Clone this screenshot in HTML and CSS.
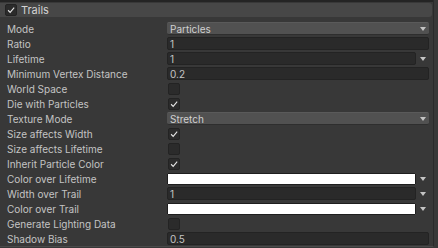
FILE: index.html
```html
<!DOCTYPE html>
<html>
<head>
<meta charset="utf-8">
<link rel="stylesheet" href="styles.css">
</head>
<body>
<div class="panel">
  <div class="topline"></div>
  <div class="header">
    <span class="toggle on hdr"><svg viewBox="0 0 12 12"><path d="M2.5 6.3 L5 8.8 L9.8 3.2" /></svg></span>
    <span class="title">Trails</span>
  </div>
  <div class="rows">
    <div class="row"><span class="label">Mode</span><div class="ctrl"><div class="dropdown"><span>Particles</span><i class="arrow"></i></div></div></div>
    <div class="row"><span class="label">Ratio</span><div class="ctrl"><div class="field">1</div></div></div>
    <div class="row"><span class="label">Lifetime</span><div class="ctrl"><div class="field short">1</div><i class="arrow side"></i></div></div>
    <div class="row"><span class="label">Minimum Vertex Distance</span><div class="ctrl"><div class="field">0.2</div></div></div>
    <div class="row"><span class="label">World Space</span><div class="ctrl"><span class="toggle"></span></div></div>
    <div class="row"><span class="label">Die with Particles</span><div class="ctrl"><span class="toggle on"><svg viewBox="0 0 12 12"><path d="M2.5 6.3 L5 8.8 L9.8 3.2" /></svg></span></div></div>
    <div class="row"><span class="label">Texture Mode</span><div class="ctrl"><div class="dropdown"><span>Stretch</span><i class="arrow"></i></div></div></div>
    <div class="row"><span class="label">Size affects Width</span><div class="ctrl"><span class="toggle on"><svg viewBox="0 0 12 12"><path d="M2.5 6.3 L5 8.8 L9.8 3.2" /></svg></span></div></div>
    <div class="row"><span class="label">Size affects Lifetime</span><div class="ctrl"><span class="toggle"></span></div></div>
    <div class="row"><span class="label">Inherit Particle Color</span><div class="ctrl"><span class="toggle on"><svg viewBox="0 0 12 12"><path d="M2.5 6.3 L5 8.8 L9.8 3.2" /></svg></span></div></div>
    <div class="row"><span class="label">Color over Lifetime</span><div class="ctrl"><div class="color"></div><i class="arrow side"></i></div></div>
    <div class="row"><span class="label">Width over Trail</span><div class="ctrl"><div class="field short">1</div><i class="arrow side"></i></div></div>
    <div class="row"><span class="label">Color over Trail</span><div class="ctrl"><div class="color"></div><i class="arrow side"></i></div></div>
    <div class="row"><span class="label">Generate Lighting Data</span><div class="ctrl"><span class="toggle"></span></div></div>
    <div class="row"><span class="label">Shadow Bias</span><div class="ctrl"><div class="field">0.5</div></div></div>
  </div>
</div>
</body>
</html>
```
FILE: styles.css
```css
html, body {
  margin: 0;
  padding: 0;
  background: #383838;
}
body {
  width: 438px;
  height: 248px;
  overflow: hidden;
  font-family: Inter, "Noto Sans", sans-serif;
  font-size: 10px;
  color: #c4c4c4;
}
.panel {
  width: 433px;
  height: 246px;
  border-right: 1px solid #2a2a2a;
  border-bottom: 1px solid #4a4a4a;
  box-sizing: content-box;
}
.topline {
  height: 2px;
  background: #242424;
}
.header {
  margin-top: 1px;
  height: 14px;
  width: 432px;
  background: #474747;
  border-radius: 0 3px 3px 0;
  display: flex;
  align-items: center;
  box-sizing: border-box;
  padding-left: 5px;
}
.title {
  font-size: 11px;
  margin-left: 4px;
  color: #d2d2d2;
}
.rows {
  padding-top: 4px;
}
.row {
  height: 15px;
  display: flex;
  align-items: center;
}
.label {
  width: 160px;
  padding-left: 7px;
  white-space: nowrap;
}
.ctrl {
  flex: 1;
  display: flex;
  align-items: center;
  padding-right: 4px;
}
.dropdown {
  flex: 1;
  height: 13px;
  background: #515151;
  border-radius: 2px;
  border-top: 1px solid #5a5a5a;
  border-bottom: 1px solid #2e2e2e;
  box-sizing: border-box;
  display: flex;
  align-items: center;
  justify-content: space-between;
  padding: 0 3px 0 3px;
  color: #d0d0d0;
}
.field {
  flex: 1;
  height: 13px;
  background: #2a2a2a;
  border: 1px solid #232323;
  border-radius: 2px;
  box-sizing: border-box;
  display: flex;
  align-items: center;
  padding-left: 2px;
}
.field.short {
  flex: 1;
}
.color {
  flex: 1;
  height: 12px;
  background: #ffffff;
  border: 1px solid #1e1e1e;
  border-radius: 1px;
  box-sizing: border-box;
}
.arrow {
  width: 0;
  height: 0;
  border-left: 3.5px solid transparent;
  border-right: 3.5px solid transparent;
  border-top: 4px solid #c4c4c4;
}
.arrow.side {
  margin: 0 3px 0 4px;
}
.toggle {
  width: 12px;
  height: 12px;
  background: #2b2b2b;
  border: 1px solid #232323;
  border-radius: 2px;
  box-sizing: border-box;
  margin-left: 1px;
  display: flex;
  align-items: center;
  justify-content: center;
}
.toggle.hdr {
  margin-left: 0;
  width: 12px;
  height: 12px;
}
.toggle svg {
  width: 10px;
  height: 10px;
}
.toggle path {
  fill: none;
  stroke: #e6e6e6;
  stroke-width: 1.3;
}
```
